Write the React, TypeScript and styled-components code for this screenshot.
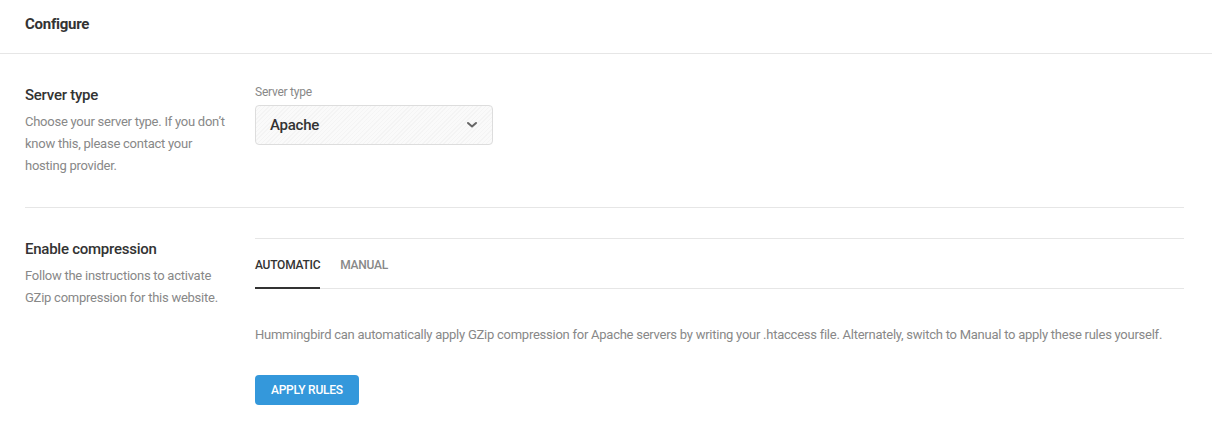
import React, { useState } from "react";
import styled, { createGlobalStyle } from "styled-components";

const Global = createGlobalStyle`
  html, body { margin: 0; padding: 0; background: #fff; }
  body {
    font-family: Roboto, "Open Sans", Arial, sans-serif;
    letter-spacing: -0.25px;
    -webkit-font-smoothing: antialiased;
  }
  * { box-sizing: border-box; }
`;

const Box = styled.div`
  width: 1212px;
  min-height: 431px;
  background: #fff;
`;

const Header = styled.div`
  height: 54px;
  display: flex;
  align-items: center;
  padding: 0 25px 6px;
  border-bottom: 1px solid #e6e6e6;
`;

const HeaderTitle = styled.h2`
  margin: 0;
  font-size: 15px;
  font-weight: 700;
  color: #333;
`;

const Body = styled.div`
  padding: 0 28px 0 25px;
`;

const Row = styled.div<{ $last?: boolean }>`
  display: flex;
  padding: 30px 0;
  border-bottom: ${(p) => (p.$last ? "none" : "1px solid #e6e6e6")};
`;

const LabelCol = styled.div`
  width: 230px;
  flex-shrink: 0;
  padding-right: 20px;
`;

const Title = styled.div`
  font-size: 15px;
  line-height: 22px;
  font-weight: 500;
  color: #333;
  margin-bottom: 5px;
`;

const Desc = styled.p`
  margin: 0;
  font-size: 13px;
  line-height: 22px;
  color: #888;
`;

const ContentCol = styled.div`
  flex: 1;
  min-width: 0;
`;

const FieldLabel = styled.label`
  display: block;
  font-size: 12px;
  line-height: 16px;
  color: #888;
  margin-bottom: 5px;
`;

const Select = styled.div`
  width: 238px;
  height: 40px;
  display: flex;
  align-items: center;
  justify-content: space-between;
  padding: 0 14px 0 14px;
  border: 1px solid #ddd;
  border-radius: 4px;
  background-color: #fafafa;
  background-image: repeating-linear-gradient(
    135deg,
    rgba(0, 0, 0, 0.025) 0px,
    rgba(0, 0, 0, 0.025) 1px,
    transparent 1px,
    transparent 3px
  );
  font-size: 15px;
  font-weight: 500;
  color: #333;
  cursor: pointer;
`;

const Tabs = styled.div`
  display: flex;
  gap: 20px;
  height: 51px;
  padding-top: 2px;
  border-top: 1px solid #e6e6e6;
  border-bottom: 1px solid #e6e6e6;
`;

const Tab = styled.button<{ $active?: boolean }>`
  position: relative;
  border: 0;
  background: none;
  padding: 0;
  font-family: inherit;
  letter-spacing: inherit;
  font-size: 12px;
  font-weight: 500;
  text-transform: uppercase;
  color: ${(p) => (p.$active ? "#333" : "#888")};
  cursor: pointer;
  &::after {
    content: "";
    position: absolute;
    left: 0;
    right: 0;
    bottom: -1px;
    height: 2px;
    background: ${(p) => (p.$active ? "#333" : "transparent")};
  }
`;

const Para = styled.p`
  margin: 35px 0 29px;
  font-size: 13px;
  line-height: 22px;
  color: #888;
`;

const Button = styled.button`
  height: 30px;
  padding: 0 16px;
  border: 0;
  border-radius: 4px;
  background: #3498db;
  color: #fff;
  font-family: inherit;
  letter-spacing: inherit;
  font-size: 12px;
  font-weight: 500;
  text-transform: uppercase;
  cursor: pointer;
`;

export default function App() {
  const [tab, setTab] = useState("automatic");
  return (
    <>
      <Global />
      <Box>
        <Header>
          <HeaderTitle>Configure</HeaderTitle>
        </Header>
        <Body>
          <Row>
            <LabelCol>
              <Title>Server type</Title>
              <Desc>Choose your server type. If you don’t know this, please contact your hosting provider.</Desc>
            </LabelCol>
            <ContentCol>
              <FieldLabel>Server type</FieldLabel>
              <Select>
                <span>Apache</span>
                <svg width="12" height="8" viewBox="0 0 12 8" fill="none">
                  <path d="M2 2L6 5.5L10 2" stroke="#666" strokeWidth="2" strokeLinecap="round" strokeLinejoin="round" />
                </svg>
              </Select>
            </ContentCol>
          </Row>
          <Row $last>
            <LabelCol>
              <Title>Enable compression</Title>
              <Desc>Follow the instructions to activate GZip compression for this website.</Desc>
            </LabelCol>
            <ContentCol>
              <Tabs>
                <Tab $active={tab === "automatic"} onClick={() => setTab("automatic")}>Automatic</Tab>
                <Tab $active={tab === "manual"} onClick={() => setTab("manual")}>Manual</Tab>
              </Tabs>
              <Para>
                Hummingbird can automatically apply GZip compression for Apache servers by writing your .htaccess file. Alternately, switch to Manual to apply these rules yourself.
              </Para>
              <Button>Apply rules</Button>
            </ContentCol>
          </Row>
        </Body>
      </Box>
    </>
  );
}
